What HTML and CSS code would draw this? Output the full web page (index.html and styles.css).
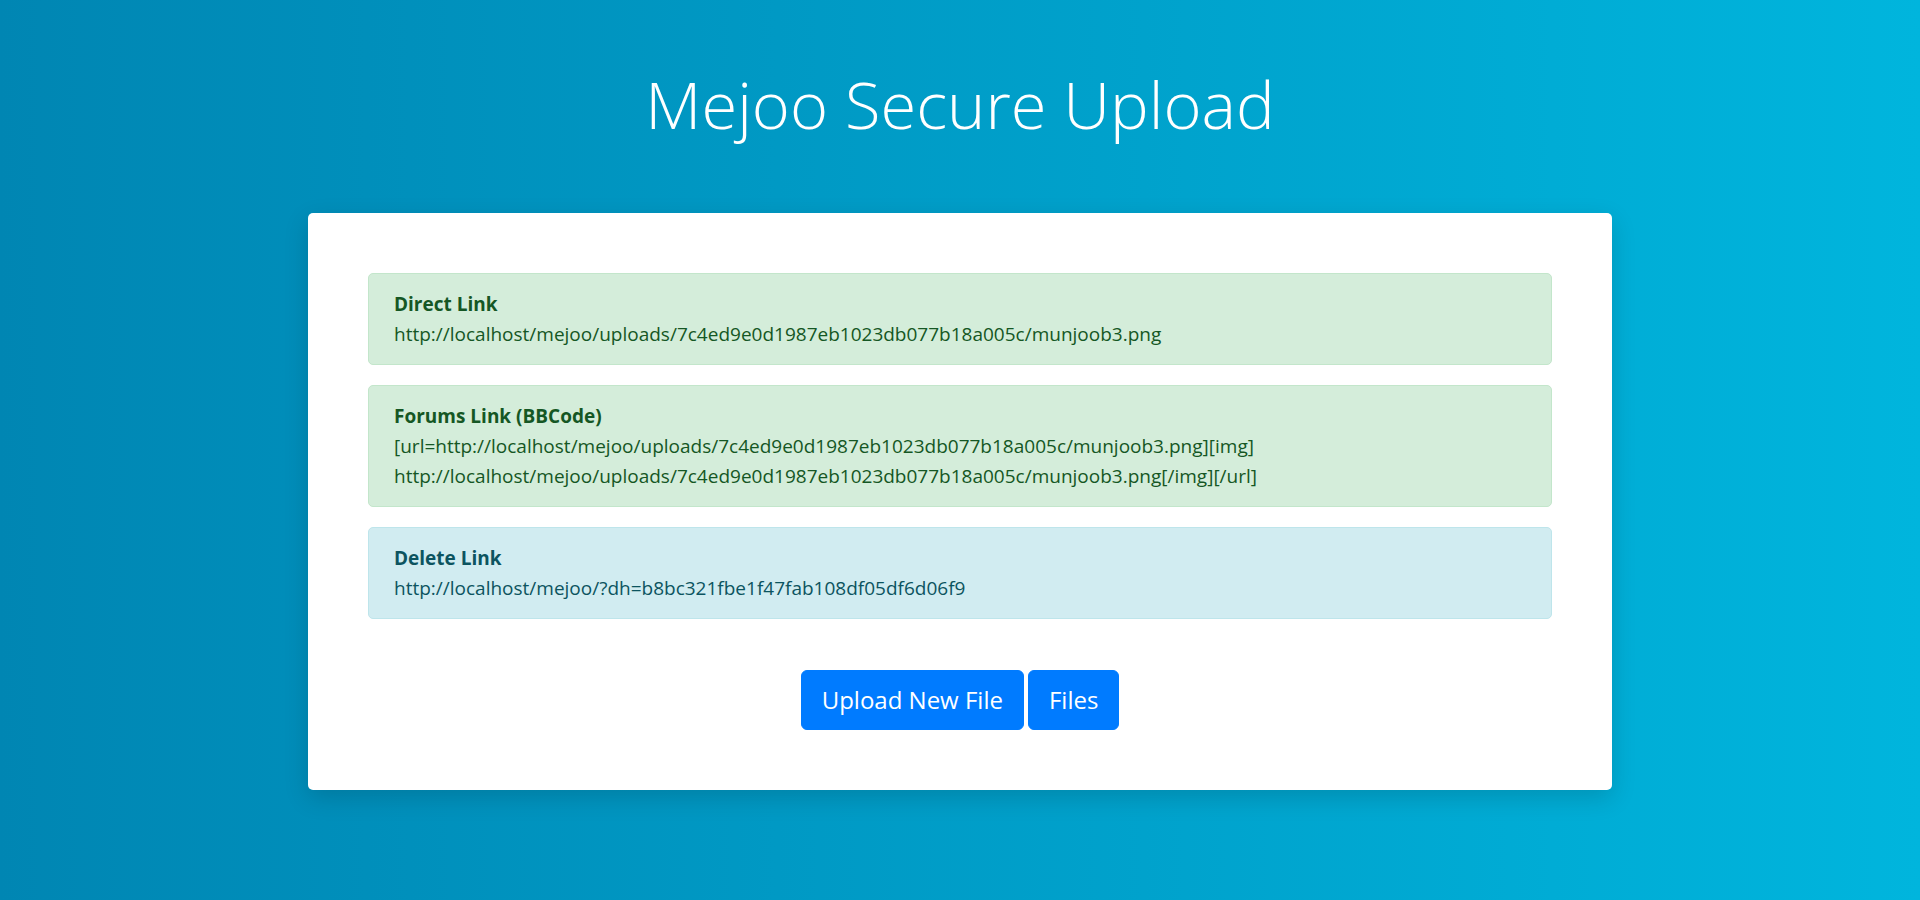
FILE: index.html
```html
<!DOCTYPE html>
<html>
<head>
    <title>Mejoo Secure Upload</title>
    <meta name="viewport" content="width=device-width, initial-scale=1.0">
    <link rel="stylesheet" href="styles.css">
</head>
<body>
    <div class="page">
        <!-- Header -->
        <h1 class="site-title">Mejoo Secure Upload</h1>

        <!-- Result card -->
        <div class="card">
            <div class="alert alert-success">
                <strong>Direct Link</strong><br>
                http://localhost/mejoo/uploads/7c4ed9e0d1987eb1023db077b18a005c/munjoob3.png
            </div>

            <div class="alert alert-success">
                <strong>Forums Link (BBCode)</strong><br>
                [url=http://localhost/mejoo/uploads/7c4ed9e0d1987eb1023db077b18a005c/munjoob3.png][img]<br>
                http://localhost/mejoo/uploads/7c4ed9e0d1987eb1023db077b18a005c/munjoob3.png[/img][/url]
            </div>

            <div class="alert alert-info">
                <strong>Delete Link</strong><br>
                http://localhost/mejoo/?dh=b8bc321fbe1f47fab108df05df6d06f9
            </div>

            <div class="actions">
                <a href="#" class="btn">Upload New File</a>
                <a href="#" class="btn">Files</a>
            </div>
        </div>
    </div>
</body>
</html>
```

FILE: styles.css
```css
/* Reset some basic elements */
* {
    box-sizing: border-box;
    margin: 0;
    padding: 0;
}

html, body {
    height: 100%;
}

body {
    font-family: "Open Sans", "Noto Sans", sans-serif;
    font-size: 19px;
    line-height: 30px;
    color: #212529;
    background: linear-gradient(to right, #0086b3, #00b5dd);
}

.page {
    padding-top: 68px;
}

/* Big light heading */
.site-title {
    text-align: center;
    color: #fff;
    font-weight: 300;
    font-size: 65px;
    line-height: 72px;
    margin-bottom: 73px;
}

/* White box holding the links */
.card {
    width: 1304px;
    margin: 0 auto;
    background-color: #fff;
    border-radius: 5px;
    padding: 60px;
    box-shadow: 0 8px 24px rgba(0, 0, 0, 0.15);
}

.alert {
    padding: 15px 25px;
    border: 1px solid transparent;
    border-radius: 5px;
    margin-bottom: 20px;
}
.alert strong {
    font-weight: 700;
}
.alert-success {
    background-color: #d4edda;
    border-color: #c3e6cb;
    color: #155724;
}
.alert-info {
    background-color: #d1ecf1;
    border-color: #bee5eb;
    color: #0c5460;
}

/* Buttons row */
.actions {
    text-align: center;
    margin-top: 51px;
    font-size: 0;
}
.btn {
    display: inline-block;
    padding: 10px 20px;
    font-size: 24px;
    line-height: 38px;
    color: #fff;
    background-color: #007bff;
    border: 1px solid #007bff;
    border-radius: 6px;
    text-decoration: none;
    margin: 0 2px;
}
```
